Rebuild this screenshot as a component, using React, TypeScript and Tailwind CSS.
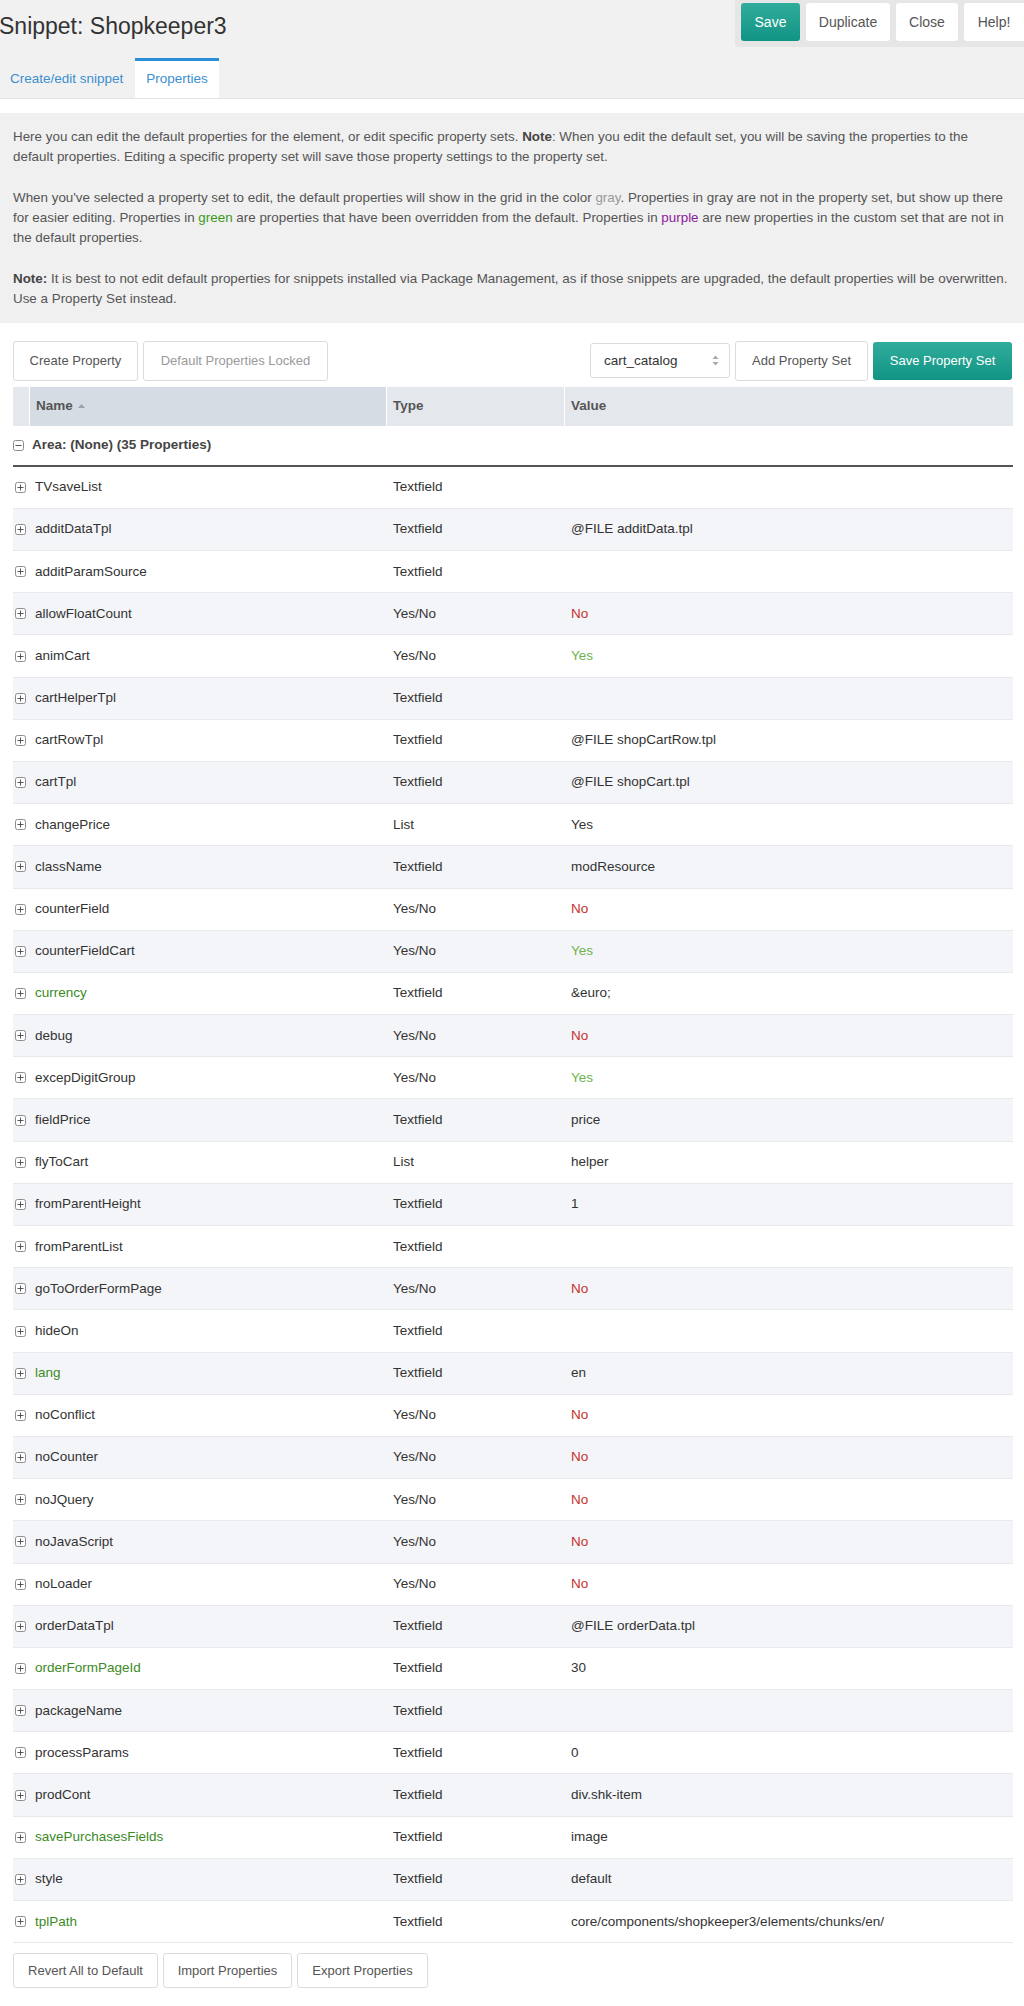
import React from 'react';

type Row = {
  name: string;
  type: string;
  value: string;
  nameGreen?: boolean;
  tone?: 'no' | 'yes';
};

const rows: Row[] = [
  { name: 'TVsaveList', type: 'Textfield', value: '' },
  { name: 'additDataTpl', type: 'Textfield', value: '@FILE additData.tpl' },
  { name: 'additParamSource', type: 'Textfield', value: '' },
  { name: 'allowFloatCount', type: 'Yes/No', value: 'No', tone: 'no' },
  { name: 'animCart', type: 'Yes/No', value: 'Yes', tone: 'yes' },
  { name: 'cartHelperTpl', type: 'Textfield', value: '' },
  { name: 'cartRowTpl', type: 'Textfield', value: '@FILE shopCartRow.tpl' },
  { name: 'cartTpl', type: 'Textfield', value: '@FILE shopCart.tpl' },
  { name: 'changePrice', type: 'List', value: 'Yes' },
  { name: 'className', type: 'Textfield', value: 'modResource' },
  { name: 'counterField', type: 'Yes/No', value: 'No', tone: 'no' },
  { name: 'counterFieldCart', type: 'Yes/No', value: 'Yes', tone: 'yes' },
  { name: 'currency', type: 'Textfield', value: '&euro;', nameGreen: true },
  { name: 'debug', type: 'Yes/No', value: 'No', tone: 'no' },
  { name: 'excepDigitGroup', type: 'Yes/No', value: 'Yes', tone: 'yes' },
  { name: 'fieldPrice', type: 'Textfield', value: 'price' },
  { name: 'flyToCart', type: 'List', value: 'helper' },
  { name: 'fromParentHeight', type: 'Textfield', value: '1' },
  { name: 'fromParentList', type: 'Textfield', value: '' },
  { name: 'goToOrderFormPage', type: 'Yes/No', value: 'No', tone: 'no' },
  { name: 'hideOn', type: 'Textfield', value: '' },
  { name: 'lang', type: 'Textfield', value: 'en', nameGreen: true },
  { name: 'noConflict', type: 'Yes/No', value: 'No', tone: 'no' },
  { name: 'noCounter', type: 'Yes/No', value: 'No', tone: 'no' },
  { name: 'noJQuery', type: 'Yes/No', value: 'No', tone: 'no' },
  { name: 'noJavaScript', type: 'Yes/No', value: 'No', tone: 'no' },
  { name: 'noLoader', type: 'Yes/No', value: 'No', tone: 'no' },
  { name: 'orderDataTpl', type: 'Textfield', value: '@FILE orderData.tpl' },
  { name: 'orderFormPageId', type: 'Textfield', value: '30', nameGreen: true },
  { name: 'packageName', type: 'Textfield', value: '' },
  { name: 'processParams', type: 'Textfield', value: '0' },
  { name: 'prodCont', type: 'Textfield', value: 'div.shk-item' },
  { name: 'savePurchasesFields', type: 'Textfield', value: 'image', nameGreen: true },
  { name: 'style', type: 'Textfield', value: 'default' },
  { name: 'tplPath', type: 'Textfield', value: 'core/components/shopkeeper3/elements/chunks/en/', nameGreen: true },
];

const ExpandIcon = ({ minus }: { minus?: boolean }) => (
  <svg width="11" height="11" viewBox="0 0 11 11" className="shrink-0">
    <rect x="0.5" y="0.5" width="10" height="10" rx="2" fill="#fff" stroke="#8c8c8c" />
    <path d="M2.5 5.5h6" stroke="#555" strokeWidth="1" />
    {!minus && <path d="M5.5 2.5v6" stroke="#555" strokeWidth="1" />}
  </svg>
);

const GrayButton = ({ children, w, muted }: { children: React.ReactNode; w: string; muted?: boolean }) => (
  <button
    className={`${w} h-[35px] rounded-[3px] border border-[#dcdcdc] bg-white text-[13px] ${muted ? 'text-[#9a9a9a]' : 'text-[#555]'}`}
  >
    {children}
  </button>
);

export default function App() {
  return (
    <div className="w-[1024px] min-h-[2006px] bg-white font-['Liberation_Sans',Arial,sans-serif] text-[#333]">
      {/* header */}
      <div className="flex h-[58px] justify-between bg-[#f1f1f1]">
        <h1 className="-ml-[1px] pt-[13px] text-[23px] leading-[26px] text-[#333]">Snippet: Shopkeeper3</h1>
        <div className="flex h-[47px] gap-[6px] rounded-bl-[4px] bg-[#e6e6e6] pl-[6px] pt-[3px]">
          <button className="h-[38px] w-[59px] rounded-[3px] bg-gradient-to-b from-[#2fac9c] to-[#0f9484] text-[14px] text-white">Save</button>
          <button className="h-[38px] w-[84px] rounded-[3px] bg-white text-[14px] text-[#555]">Duplicate</button>
          <button className="h-[38px] w-[62px] rounded-[3px] bg-white text-[14px] text-[#555]">Close</button>
          <button className="h-[38px] w-[60px] rounded-l-[3px] bg-white text-[14px] text-[#555]">Help!</button>
        </div>
      </div>

      {/* tabs */}
      <div className="flex h-[41px] items-stretch border-b border-[#e4e4e4] bg-[#f1f1f1]">
        <div className="flex w-[135px] items-center pl-[10px] pt-[3px] text-[13.5px] text-[#3d8fcf]">Create/edit snippet</div>
        <div className="flex w-[84px] items-center justify-center border-t-[3px] border-[#2b8fd6] bg-white text-[13.5px] text-[#3d8fcf]">Properties</div>
      </div>

      <div className="h-[14px] bg-white" />

      {/* description */}
      <div className="whitespace-nowrap bg-[#f0f0f0] px-[13px] pb-[13px] pt-[14px] text-[13.4px] leading-[20.3px] text-[#555]">
        <p>
          Here you can edit the default properties for the element, or edit specific property sets. <b className="text-[#444]">Note</b>: When you edit the default set, you will be saving the properties to the
          <br />
          default properties. Editing a specific property set will save those property settings to the property set.
        </p>
        <p className="mt-[20.3px]">
          When you've selected a property set to edit, the default properties will show in the grid in the color <span className="text-[#999]">gray</span>. Properties in gray are not in the property set, but show up there
          <br />
          for easier editing. Properties in <span className="text-[#3a9a1a]">green</span> are properties that have been overridden from the default. Properties in <span className="text-[#8b1a9c]">purple</span> are new properties in the custom set that are not in
          <br />
          the default properties.
        </p>
        <p className="mt-[20.3px]">
          <b className="text-[#444]">Note:</b> It is best to not edit default properties for snippets installed via Package Management, as if those snippets are upgraded, the default properties will be overwritten.
          <br />
          Use a Property Set instead.
        </p>
      </div>

      {/* toolbar */}
      <div className="mt-[18px] flex h-[40px] items-center justify-between pl-[13px] pr-[12px]">
        <div className="flex gap-[5px]">
          <GrayButton w="w-[125px] h-[40px]">Create Property</GrayButton>
          <GrayButton w="w-[185px] h-[40px]" muted>Default Properties Locked</GrayButton>
        </div>
        <div className="flex items-center gap-[5px]">
          <div className="flex h-[35px] w-[140px] items-center justify-between rounded-[3px] border border-[#dcdcdc] bg-white pl-[13px] pr-[10px] text-[13.5px] text-[#333]">
            <span>cart_catalog</span>
            <svg width="7" height="11" viewBox="0 0 7 11">
              <path d="M3.5 0.5L6.5 4H0.5Z" fill="#aaa" />
              <path d="M3.5 10.5L6.5 7H0.5Z" fill="#aaa" />
            </svg>
          </div>
          <GrayButton w="w-[133px] h-[40px]">Add Property Set</GrayButton>
          <button className="h-[38px] w-[139px] rounded-[3px] bg-gradient-to-b from-[#2fac9c] to-[#0f9484] text-[13px] text-white">Save Property Set</button>
        </div>
      </div>

      {/* grid */}
      <div className="mx-[13px] mt-[6px] w-[1000px]">
        <div className="flex h-[39px] text-[13.5px] font-bold text-[#555]">
          <div className="w-[17px] border-r border-white bg-[#e4e8ec]" />
          <div className="flex w-[357px] items-center gap-[5px] border-r border-white bg-[#d5dce3] pl-[6px]">
            Name
            <svg width="7" height="4" viewBox="0 0 7 4"><path d="M3.5 0L7 4H0Z" fill="#9aa3ad" /></svg>
          </div>
          <div className="flex w-[178px] items-center border-r border-white bg-[#e4e8ec] pl-[6px]">Type</div>
          <div className="flex flex-1 items-center bg-[#e4e8ec] pl-[6px]">Value</div>
        </div>

        <div className="flex h-[41px] items-center gap-[8px] border-b-2 border-[#555] text-[13.5px] font-bold text-[#444]">
          <ExpandIcon minus />
          Area: (None) (35 Properties)
        </div>

        {rows.map((r, i) => (
          <div
            key={r.name}
            className={`flex h-[42.2px] items-center border-b border-[#e8e9ec] text-[13.5px] ${i % 2 === 1 ? 'bg-[#f4f5f8]' : 'bg-white'}`}
          >
            <div className="flex w-[374px] items-center gap-[9px] pl-[2px]">
              <ExpandIcon />
              <span className={r.nameGreen ? 'text-[#3c8a1f]' : 'text-[#333]'}>{r.name}</span>
            </div>
            <div className="w-[178px] pl-[6px] text-[#333]">{r.type}</div>
            <div
              className={`flex-1 pl-[6px] ${r.tone === 'no' ? 'text-[#c9302c]' : r.tone === 'yes' ? 'text-[#6cb34e]' : 'text-[#333]'}`}
            >
              {r.value}
            </div>
          </div>
        ))}
      </div>

      {/* bottom actions */}
      <div className="mt-[10px] flex gap-[5px] pl-[13px]">
        <GrayButton w="w-[145px]">Revert All to Default</GrayButton>
        <GrayButton w="w-[129px]">Import Properties</GrayButton>
        <GrayButton w="w-[131px]">Export Properties</GrayButton>
      </div>
    </div>
  );
}
